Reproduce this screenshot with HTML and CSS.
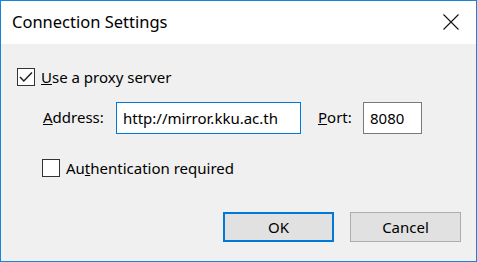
FILE: index.html
```html
<!DOCTYPE html>
<html lang="en">
<head>
    <meta charset="UTF-8">
    <title>Connection Settings</title>
    <link rel="stylesheet" href="styles.css">
</head>
<body>
    <div class="window">
        <div class="titlebar">
            <span class="title">Connection Settings</span>
            <svg class="close" width="16" height="16" viewBox="0 0 16 16">
                <path d="M0.5 0.5 L15.5 15.5 M15.5 0.5 L0.5 15.5" stroke="#111" stroke-width="1.1" fill="none"/>
            </svg>
        </div>

        <div class="content">
            <label class="check-row proxy">
                <span class="box">
                    <svg width="16" height="16" viewBox="0 0 16 16">
                        <polyline points="2,8 5.8,12 14,3.5" stroke="#222" stroke-width="1.5" fill="none"/>
                    </svg>
                </span>
                <span><u>U</u>se a proxy server</span>
            </label>

            <div class="address-row">
                <span class="label addr-label"><u>A</u>ddress:</span>
                <div class="field address">http://mirror.kku.ac.th</div>
                <span class="label port-label"><u>P</u>ort:</span>
                <div class="field port">8080</div>
            </div>

            <label class="check-row auth">
                <span class="box"></span>
                <span>Au<u>t</u>hentication required</span>
            </label>

            <div class="buttons">
                <button class="btn default">OK</button>
                <button class="btn">Cancel</button>
            </div>
        </div>
    </div>
</body>
</html>
```

FILE: styles.css
```css
* {
    box-sizing: border-box;
}

body {
    margin: 0;
    font-family: "Noto Sans", "Open Sans", sans-serif;
    font-size: 15px;
    color: #000;
}

.window {
    width: 477px;
    height: 262px;
    border: 1px solid #1883d7;
    background-color: #f0f0f0;
    display: flex;
    flex-direction: column;
}

/* Title bar */
.titlebar {
    height: 43px;
    background-color: #fff;
    display: flex;
    align-items: center;
    padding-left: 11px;
    padding-right: 17px;
}

.title {
    flex: 1;
    font-size: 16.5px;
    margin-top: -2px;
}

.close {
    margin-top: -2px;
}

/* Body */
.content {
    flex: 1;
    display: flex;
    flex-direction: column;
    padding: 24px 15px 0 16px;
}

.check-row {
    display: flex;
    align-items: center;
    height: 18px;
}

.box {
    width: 18px;
    height: 18px;
    border: 1px solid #333;
    background-color: #fff;
    margin-right: 6px;
    display: flex;
    justify-content: center;
    align-items: center;
}

.address-row {
    display: flex;
    align-items: center;
    margin-top: 16px;
    padding-left: 26px;
}

.label {
    padding-bottom: 2px;
}

.addr-label {
    width: 73px;
}

.port-label {
    margin-left: 17px;
    width: 45px;
}

.field {
    height: 32px;
    background-color: #fff;
    border: 1px solid #7a7a7a;
    padding: 4px 6px;
    line-height: 22px;
}

.field.address {
    width: 185px;
    border-color: #0078d7;
}

.field.port {
    width: 59px;
}

.auth {
    margin-top: 25px;
    padding-left: 25px;
}

.buttons {
    display: flex;
    justify-content: flex-end;
    gap: 16px;
    margin-top: 35px;
}

.btn {
    width: 111px;
    height: 30px;
    font-family: inherit;
    font-size: 15px;
    background-color: #e1e1e1;
    border: 1px solid #adadad;
    padding: 0;
}

.btn.default {
    border: 2px solid #0078d7;
}
```
